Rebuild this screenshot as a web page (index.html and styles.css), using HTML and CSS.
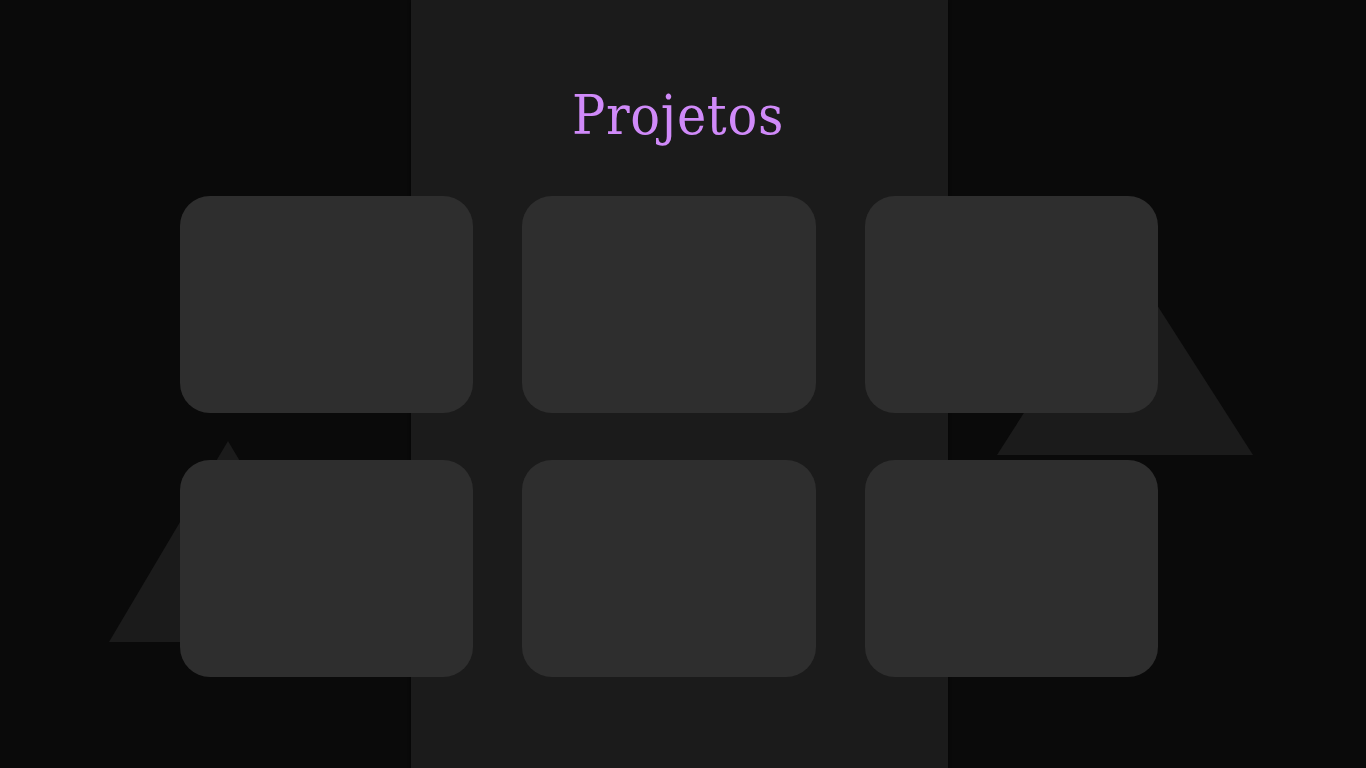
FILE: index.html
```html
<!DOCTYPE html>
<html lang="pt">
<head>
<meta charset="utf-8">
<title>Projetos</title>
<link rel="stylesheet" href="styles.css">
</head>
<body>
<div class="backdrop">
  <div class="panel"></div>
  <div class="tri tri-left"></div>
  <div class="tri tri-right"></div>
</div>
<main class="page">
  <h1 class="title">Projetos</h1>
  <section class="grid">
    <div class="card"></div>
    <div class="card"></div>
    <div class="card"></div>
    <div class="card"></div>
    <div class="card"></div>
    <div class="card"></div>
  </section>
</main>
</body>
</html>
```
FILE: styles.css
```css
html, body {
  margin: 0;
  padding: 0;
  height: 100%;
}
body {
  background: #0a0a0a;
  overflow: hidden;
  position: relative;
  font-family: "DejaVu Serif", serif;
}
.backdrop {
  position: absolute;
  inset: 0;
  z-index: 0;
}
.panel {
  position: absolute;
  left: 411px;
  top: 0;
  width: 537px;
  height: 800px;
  background: #1b1b1b;
  box-shadow: 0 0 3px rgba(0, 0, 0, 0.6);
}
.tri {
  position: absolute;
  background: #1b1b1b;
}
.tri-left {
  left: 109px;
  top: 441px;
  width: 238px;
  height: 201px;
  clip-path: polygon(50% 0, 100% 100%, 0 100%);
}
.tri-right {
  left: 997px;
  top: 255px;
  width: 256px;
  height: 200px;
  clip-path: polygon(50% 0, 100% 100%, 0 100%);
}
.page {
  position: relative;
  z-index: 1;
  display: flex;
  flex-direction: column;
  align-items: flex-start;
}
.title {
  margin: 88px 0 0 572px;
  font-family: "DejaVu Serif Condensed", "DejaVu Serif", serif;
  font-stretch: condensed;
  font-weight: normal;
  font-size: 55px;
  line-height: 55px;
  letter-spacing: 0.7px;
  color: #d08af9;
}
.grid {
  margin: 53px 0 0 180px;
  width: 978px;
  display: grid;
  grid-template-columns: repeat(3, 1fr);
  grid-auto-rows: 217px;
  column-gap: 49px;
  row-gap: 47px;
}
.card {
  background: #2e2e2e;
  border-radius: 30px;
}
```
